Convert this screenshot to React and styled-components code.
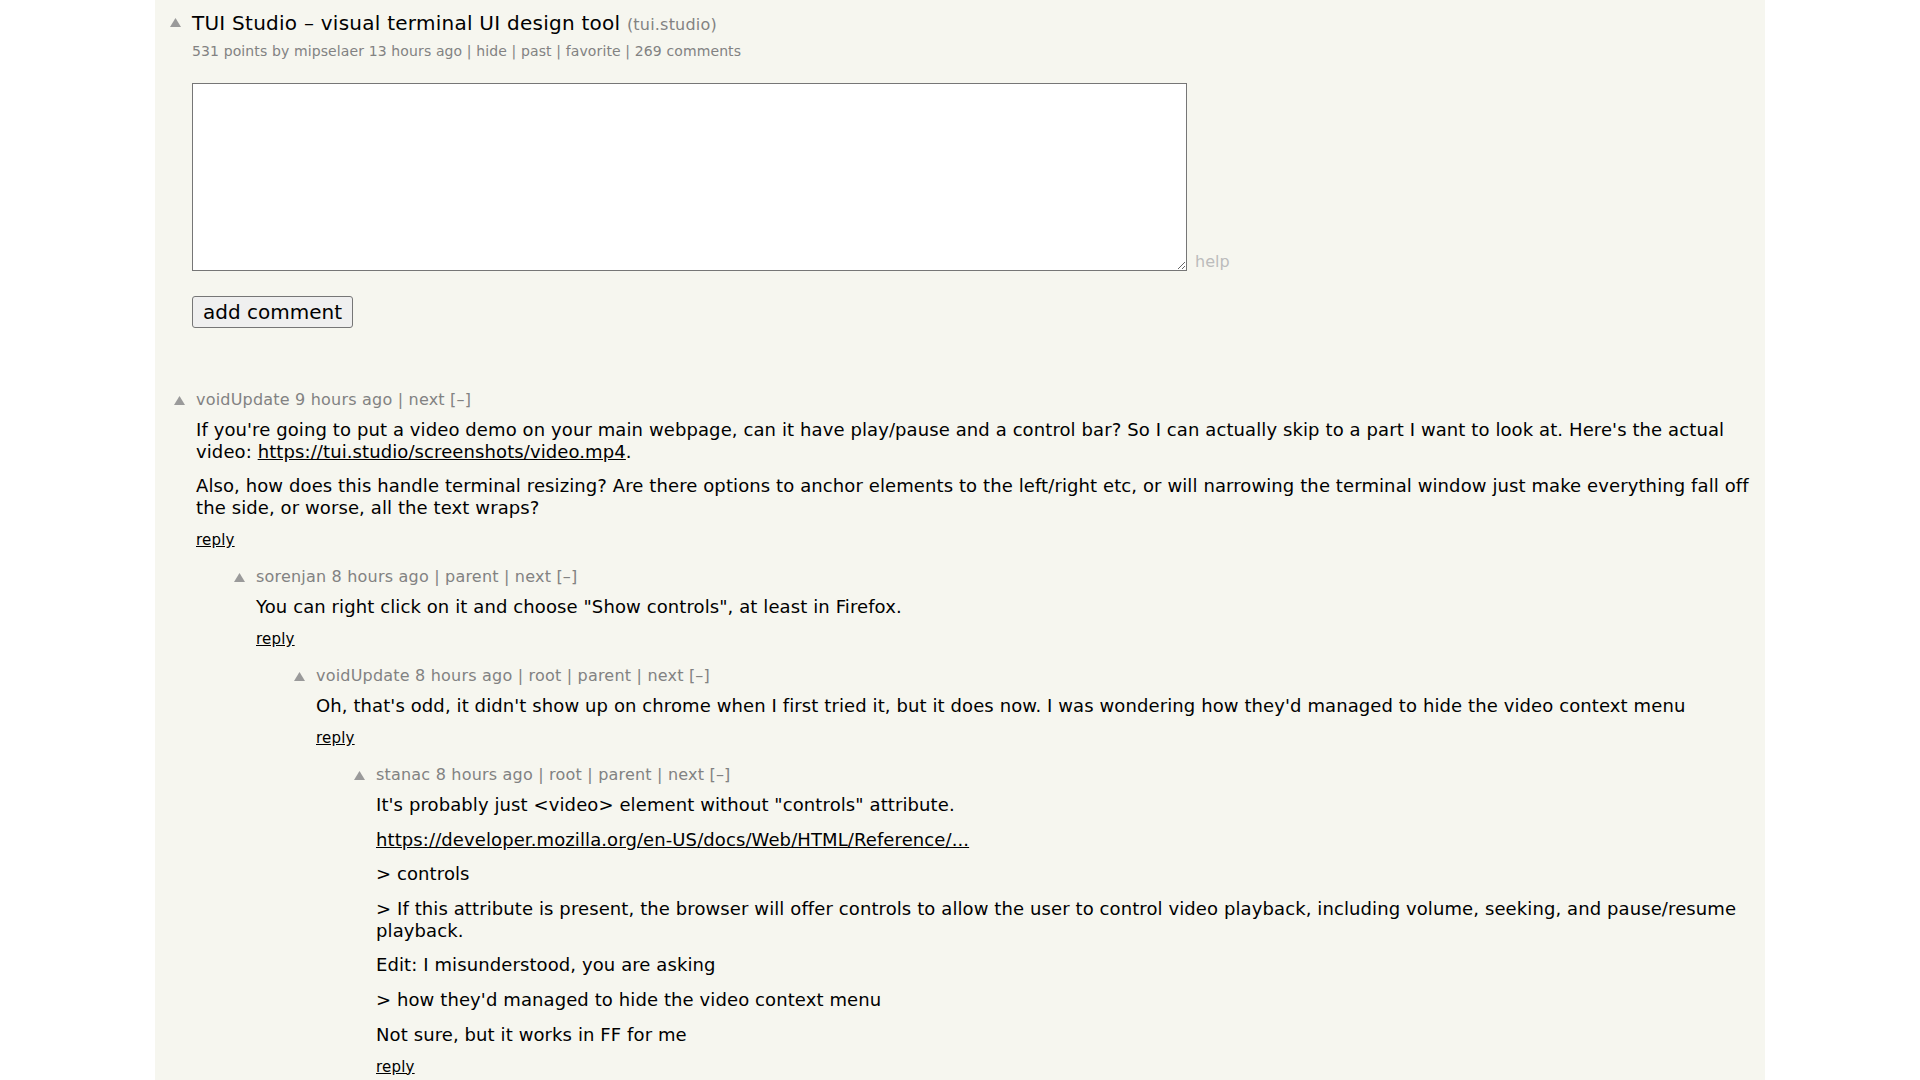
import React from 'react';
import styled, { createGlobalStyle } from 'styled-components';

const GlobalStyle = createGlobalStyle`
  html, body { margin: 0; padding: 0; background: #ffffff; overflow: hidden; }
  body { font-family: "DejaVu Sans", Verdana, Geneva, sans-serif; }
`;

const Page = styled.div`
  width: 1610px;
  min-height: 1080px;
  margin: 0 auto;
  background: #f6f6ef;
  box-sizing: border-box;
  padding: 11px 5px 0 0;
`;

const Row = styled.div`
  display: flex;
  align-items: flex-start;
  padding-left: ${p => p.$pad}px;
  margin-bottom: ${p => p.$mb || 0}px;
`;

const Indent = styled.div`
  flex: none;
  width: ${p => p.$level * 60}px;
`;

const VoteCol = styled.div`
  flex: none;
  width: ${p => p.$w}px;
`;

const ArrowSvg = styled.svg`
  display: block;
  width: 15px;
  height: 15px;
  margin-top: ${p => p.$top}px;
`;

const Content = styled.div`
  flex: 1;
  min-width: 0;
`;

const Title = styled.div`
  font-size: 20px;
  line-height: 24px;
  letter-spacing: 0.25px;
  color: #000;
`;

const SiteStr = styled.span`
  font-size: 16px;
  letter-spacing: 0.2px;
  color: #828282;
`;

const SubText = styled.div`
  font-size: 14px;
  line-height: 17px;
  letter-spacing: 0.12px;
  color: #828282;
  margin-top: 6px;
`;

const FormRow = styled.div`
  display: flex;
  align-items: flex-end;
  margin-top: 23px;
`;

const TextArea = styled.textarea`
  width: 995px;
  height: 188px;
  box-sizing: border-box;
  border: 1px solid #767676;
  background: #fff;
  font-family: "DejaVu Sans Mono", monospace;
  font-size: 20px;
  margin: 0;
  padding: 3px;
`;

const Help = styled.span`
  font-size: 16px;
  line-height: 19px;
  color: #bcbcbc;
  margin-left: 8px;
`;

const SubmitButton = styled.button`
  display: block;
  margin-top: 25px;
  height: 32px;
  padding: 0 10px;
  font-family: "DejaVu Sans", Verdana, sans-serif;
  font-size: 20px;
  line-height: 23px;
  color: #000;
  background: #efefef;
  border: 1px solid #767676;
  border-radius: 3px;
`;

const Tree = styled.div`
  margin-top: 61.5px;
`;

const Head = styled.div`
  font-size: 16px;
  line-height: 19px;
  letter-spacing: 0.2px;
  color: #828282;
`;

const Body = styled.div`
  margin-top: 10px;
  font-size: 18px;
  line-height: 22px;
  letter-spacing: 0.1px;
  color: #000;
`;

const Para = styled.p`
  margin: 0;
  & + & { margin-top: 12.6px; }
`;

const Link = styled.a`
  color: #000;
  text-decoration: underline;
`;

const Reply = styled.div`
  margin-top: 12px;
  font-size: 15px;
  line-height: 19px;
  letter-spacing: 0.2px;
  a { color: #000; text-decoration: underline; }
`;

const Arrow = ({ top }) => (
  <ArrowSvg $top={top} viewBox="0 0 15 15">
    <polygon points="2,12 7.5,3 13,12" fill="#9a9a9a" />
  </ArrowSvg>
);

const comments = [
  {
    level: 0,
    head: 'voidUpdate 9 hours ago | next [–]',
    paras: [
      <>If you're going to put a video demo on your main webpage, can it have play/pause and a control bar? So I can actually skip to a part I want to look at. Here's the actual video: <Link href="#">https://tui.studio/screenshots/video.mp4</Link>.</>,
      <>Also, how does this handle terminal resizing? Are there options to anchor elements to the left/right etc, or will narrowing the terminal window just make everything fall off the side, or worse, all the text wraps?</>,
    ],
  },
  {
    level: 1,
    head: 'sorenjan 8 hours ago | parent | next [–]',
    paras: [<>You can right click on it and choose "Show controls", at least in Firefox.</>],
  },
  {
    level: 2,
    head: 'voidUpdate 8 hours ago | root | parent | next [–]',
    paras: [<>Oh, that's odd, it didn't show up on chrome when I first tried it, but it does now. I was wondering how they'd managed to hide the video context menu</>],
  },
  {
    level: 3,
    head: 'stanac 8 hours ago | root | parent | next [–]',
    paras: [
      <>It's probably just &lt;video&gt; element without "controls" attribute.</>,
      <Link href="#">https://developer.mozilla.org/en-US/docs/Web/HTML/Reference/...</Link>,
      <>&gt; controls</>,
      <>&gt; If this attribute is present, the browser will offer controls to allow the user to control video playback, including volume, seeking, and pause/resume playback.</>,
      <>Edit: I misunderstood, you are asking</>,
      <>&gt; how they'd managed to hide the video context menu</>,
      <>Not sure, but it works in FF for me</>,
    ],
  },
];

export default function App() {
  return (
    <>
      <GlobalStyle />
      <Page>
        <Row $pad={13}>
          <VoteCol $w={24}><Arrow top={4} /></VoteCol>
          <Content>
            <Title>TUI Studio – visual terminal UI design tool <SiteStr>(tui.studio)</SiteStr></Title>
            <SubText>531 points by mipselaer 13 hours ago | hide | past | favorite | 269 comments</SubText>
            <FormRow>
              <TextArea />
              <Help>help</Help>
            </FormRow>
            <SubmitButton>add comment</SubmitButton>
          </Content>
        </Row>
        <Tree>
          {comments.map((c, i) => (
            <Row key={i} $pad={17} $mb={17}>
              <Indent $level={c.level} />
              <VoteCol $w={24}><Arrow top={3} /></VoteCol>
              <Content>
                <Head>{c.head}</Head>
                <Body>
                  {c.paras.map((p, j) => <Para key={j}>{p}</Para>)}
                </Body>
                <Reply><a href="#">reply</a></Reply>
              </Content>
            </Row>
          ))}
        </Tree>
      </Page>
    </>
  );
}
